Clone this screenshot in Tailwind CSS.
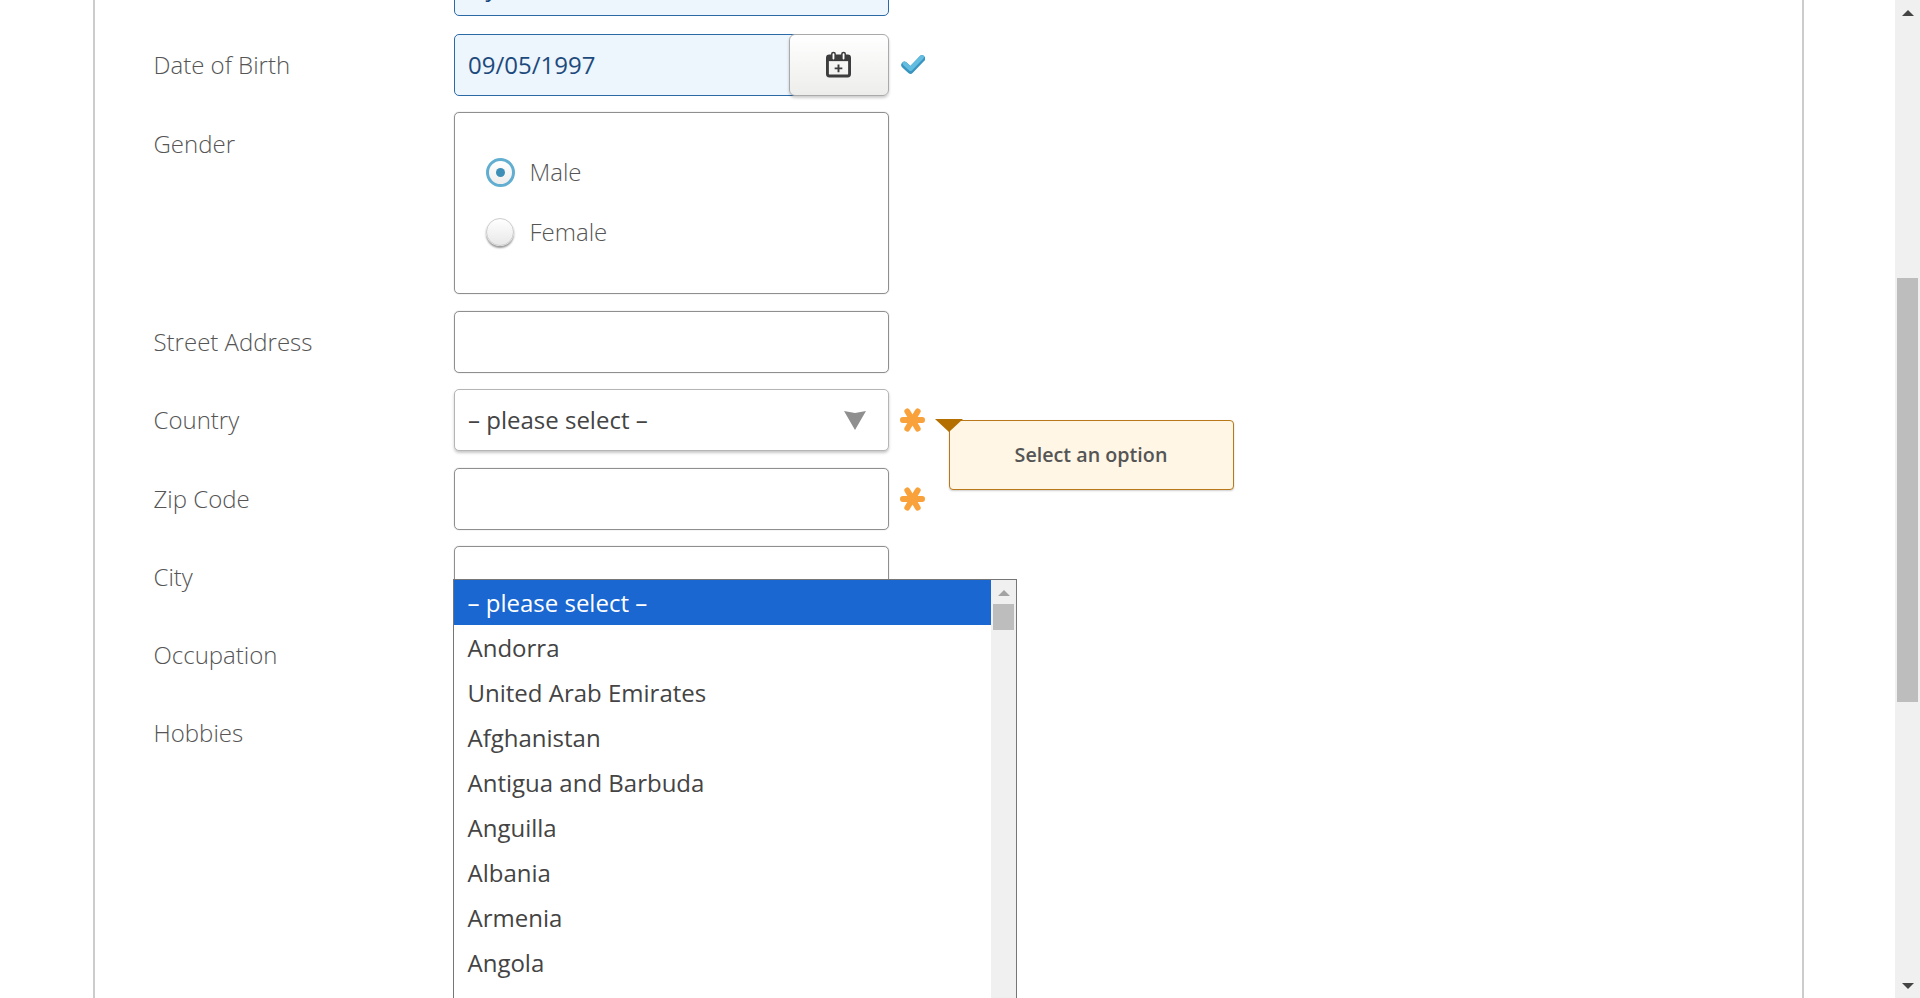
<!DOCTYPE html>
<html lang="en">
<head>
<meta charset="utf-8">
<title>Registration form</title>
<script src="https://cdn.jsdelivr.net/npm/@tailwindcss/browser@4"></script>
</head>
<body class="bg-white font-['Open_Sans',sans-serif] text-[24px] text-[#444]">
<div class="relative flex h-[998px] w-[1920px] overflow-hidden">
  <main class="h-[998px] w-[1895px] overflow-hidden pl-[93px]">
    <div class="mt-[-46px] flex h-[1200px] w-[1711px] flex-col gap-[16.4px] border-x-2 border-[#ccc] pl-[58.5px]">

      <div class="flex h-[62px] shrink-0">
        <div class="w-[300.5px]"></div>
        <div class="flex h-[62px] w-[435px] items-center rounded-[5px] border border-[#2c6aa6] bg-[#edf5fd] px-[13px] pt-[4px] text-[#1c4a7c]">Dylan</div>
      </div>

      <div class="mt-[1.6px] flex h-[62px] shrink-0">
        <div class="w-[300.5px] pt-[13px] font-light text-[#555]">Date of Birth</div>
        <div class="flex h-[62px] w-[341px] items-center rounded-l-[5px] border border-[#2c6aa6] bg-[#edf5fd] px-[13px] text-[#1c4a7c]">09/05/1997</div>
        <div class="relative ml-[-6px] flex h-[62px] w-[100px] items-center justify-center rounded-[6px] border border-[#aaa] bg-gradient-to-b from-white to-[#ededeb] shadow-[0_2px_3px_rgba(0,0,0,0.2)]">
          <svg class="-ml-[2px]" width="25" height="27" viewBox="0 0 26 27" fill="none">
            <rect x="1.5" y="4.5" width="23" height="21" rx="2" stroke="#3d3d3d" stroke-width="3"/>
            <rect x="1" y="4" width="24" height="6" fill="#3d3d3d"/>
            <rect x="6" y="1" width="3.5" height="8" rx="1.7" fill="#fff" stroke="#3d3d3d" stroke-width="1.6"/>
            <rect x="16.5" y="1" width="3.5" height="8" rx="1.7" fill="#fff" stroke="#3d3d3d" stroke-width="1.6"/>
            <path d="M13 13.5v8M9 17.5h8" stroke="#3d3d3d" stroke-width="2"/>
          </svg>
        </div>
        <svg class="ml-[12px] mt-[20px]" width="24" height="20" viewBox="0 0 24 20" fill="none">
          <path d="M3.5 11 9.5 16.5 21 4.5" stroke="#3a94c0" stroke-width="6.5" stroke-linecap="round" stroke-linejoin="round"/>
          <path d="M3.5 9.5 9.5 15 21 3" stroke="#62bde0" stroke-width="4" stroke-linecap="round" stroke-linejoin="round"/>
        </svg>
      </div>

      <div class="flex h-[182px] shrink-0">
        <div class="w-[300.5px] pt-[14px] font-light text-[#555]">Gender</div>
        <div class="flex h-[182px] w-[435px] flex-col justify-center gap-[32px] rounded-[5px] border border-[#8f8f8f] pb-[2px] pl-[30.5px] font-light text-[#555] shadow-[0_0_1px_rgba(0,0,0,0.4)]">
          <div class="flex h-[28px] items-center gap-[15px]">
            <div class="flex h-[29px] w-[29px] items-center justify-center rounded-full border-[3px] border-[#62aed0] bg-gradient-to-b from-white to-[#eee]">
              <div class="h-[9px] w-[9px] rounded-full bg-[#3d8fb8]"></div>
            </div>
            <span>Male</span>
          </div>
          <div class="flex h-[28px] items-center gap-[16px]">
            <div class="h-[28px] w-[28px] rounded-full border border-[#ccc] bg-gradient-to-b from-white to-[#e8e8e8] shadow-[0_2px_2px_rgba(0,0,0,0.4)]"></div>
            <span>Female</span>
          </div>
        </div>
      </div>

      <div class="flex h-[62px] shrink-0">
        <div class="w-[300.5px] pt-[13px] font-light text-[#555]">Street Address</div>
        <div class="h-[62px] w-[435px] rounded-[5px] border border-[#8f8f8f] shadow-[0_0_1px_rgba(0,0,0,0.4)]"></div>
      </div>

      <div class="relative flex h-[62px] shrink-0">
        <div class="w-[300.5px] pt-[13px] font-light text-[#555]">Country</div>
        <div class="flex h-[62px] w-[435px] items-center justify-between rounded-[5px] border border-[#b5b5b5] bg-white pl-[13px] pr-[21px] shadow-[0_2px_3px_rgba(0,0,0,0.22)]">
          <span>– please select –</span>
          <svg width="24" height="20" viewBox="0 0 24 20"><path d="M1 1 12 3 23 1 12 20Z" fill="#8f8f8f"/></svg>
        </div>
        <svg class="ml-[11px] mt-[19px]" width="25" height="24" viewBox="0 0 26 24" fill="none" stroke="#f9a23b" stroke-width="6" stroke-linecap="round">
          <path d="M3 12h20M7.5 3l11 18M18.5 3l-11 18"/>
        </svg>
        <div class="absolute left-[795px] top-[31px] flex h-[70px] w-[285px] items-center justify-center rounded-[4px] border border-[#b9791a] bg-[#fff6e5] text-[19.7px] font-semibold text-[#555] shadow-[0_1px_2px_rgba(0,0,0,0.2)]">Select an option</div>
        <div class="absolute left-[781px] top-[30px] h-0 w-0 border-x-[14px] border-t-[13px] border-x-transparent border-t-[#b36f00]"></div>
      </div>

      <div class="flex h-[62px] shrink-0">
        <div class="w-[300.5px] pt-[13px] font-light text-[#555]">Zip Code</div>
        <div class="h-[62px] w-[435px] rounded-[5px] border border-[#8f8f8f] shadow-[0_0_1px_rgba(0,0,0,0.4)]"></div>
        <svg class="ml-[11px] mt-[19px]" width="25" height="24" viewBox="0 0 26 24" fill="none" stroke="#f9a23b" stroke-width="6" stroke-linecap="round">
          <path d="M3 12h20M7.5 3l11 18M18.5 3l-11 18"/>
        </svg>
      </div>

      <div class="flex h-[62px] shrink-0">
        <div class="w-[300.5px] pt-[13px] font-light text-[#555]">City</div>
        <div class="h-[62px] w-[435px] rounded-[5px] border border-[#8f8f8f] shadow-[0_0_1px_rgba(0,0,0,0.4)]"></div>
      </div>

      <div class="flex h-[62px] shrink-0">
        <div class="w-[300.5px] pt-[13px] font-light text-[#555]">Occupation</div>
        <div class="h-[62px] w-[435px] rounded-[5px] border border-[#8f8f8f]"></div>
      </div>

      <div class="flex h-[62px] shrink-0">
        <div class="w-[300.5px] pt-[12px] font-light text-[#555]">Hobbies</div>
        <div class="h-[62px] w-[435px] rounded-[5px] border border-[#8f8f8f]"></div>
      </div>
    </div>
  </main>

  <aside class="flex h-[998px] w-[25px] flex-col items-center bg-[#f0f0f0]">
    <div class="mt-[10px] h-0 w-0 border-x-[6px] border-b-[6px] border-x-transparent border-b-[#444]"></div>
    <div class="mt-[262px] h-[424px] w-[21px] bg-[#bdbdbd]"></div>
    <div class="mt-[281px] h-0 w-0 border-x-[6px] border-t-[6px] border-x-transparent border-t-[#444]"></div>
  </aside>

  <div class="absolute left-[453px] top-[579px] flex h-[440px] w-[564px] border border-[#767676] bg-white">
    <ul class="w-[537px] leading-[45px]">
      <li class="h-[45px] bg-[#1a67d2] pl-[13.5px] text-white">– please select –</li>
      <li class="h-[45px] pl-[13.5px]">Andorra</li>
      <li class="h-[45px] pl-[13.5px]">United Arab Emirates</li>
      <li class="h-[45px] pl-[13.5px]">Afghanistan</li>
      <li class="h-[45px] pl-[13.5px]">Antigua and Barbuda</li>
      <li class="h-[45px] pl-[13.5px]">Anguilla</li>
      <li class="h-[45px] pl-[13.5px]">Albania</li>
      <li class="h-[45px] pl-[13.5px]">Armenia</li>
      <li class="h-[45px] pl-[13.5px]">Angola</li>
    </ul>
    <div class="flex w-[25px] flex-col items-center bg-[#f0f0f0]">
      <div class="mt-[10px] h-0 w-0 border-x-[6px] border-b-[6px] border-x-transparent border-b-[#a3a3a3]"></div>
      <div class="mt-[8px] h-[26px] w-[21px] bg-[#bdbdbd]"></div>
    </div>
  </div>
</div>
</body>
</html>
